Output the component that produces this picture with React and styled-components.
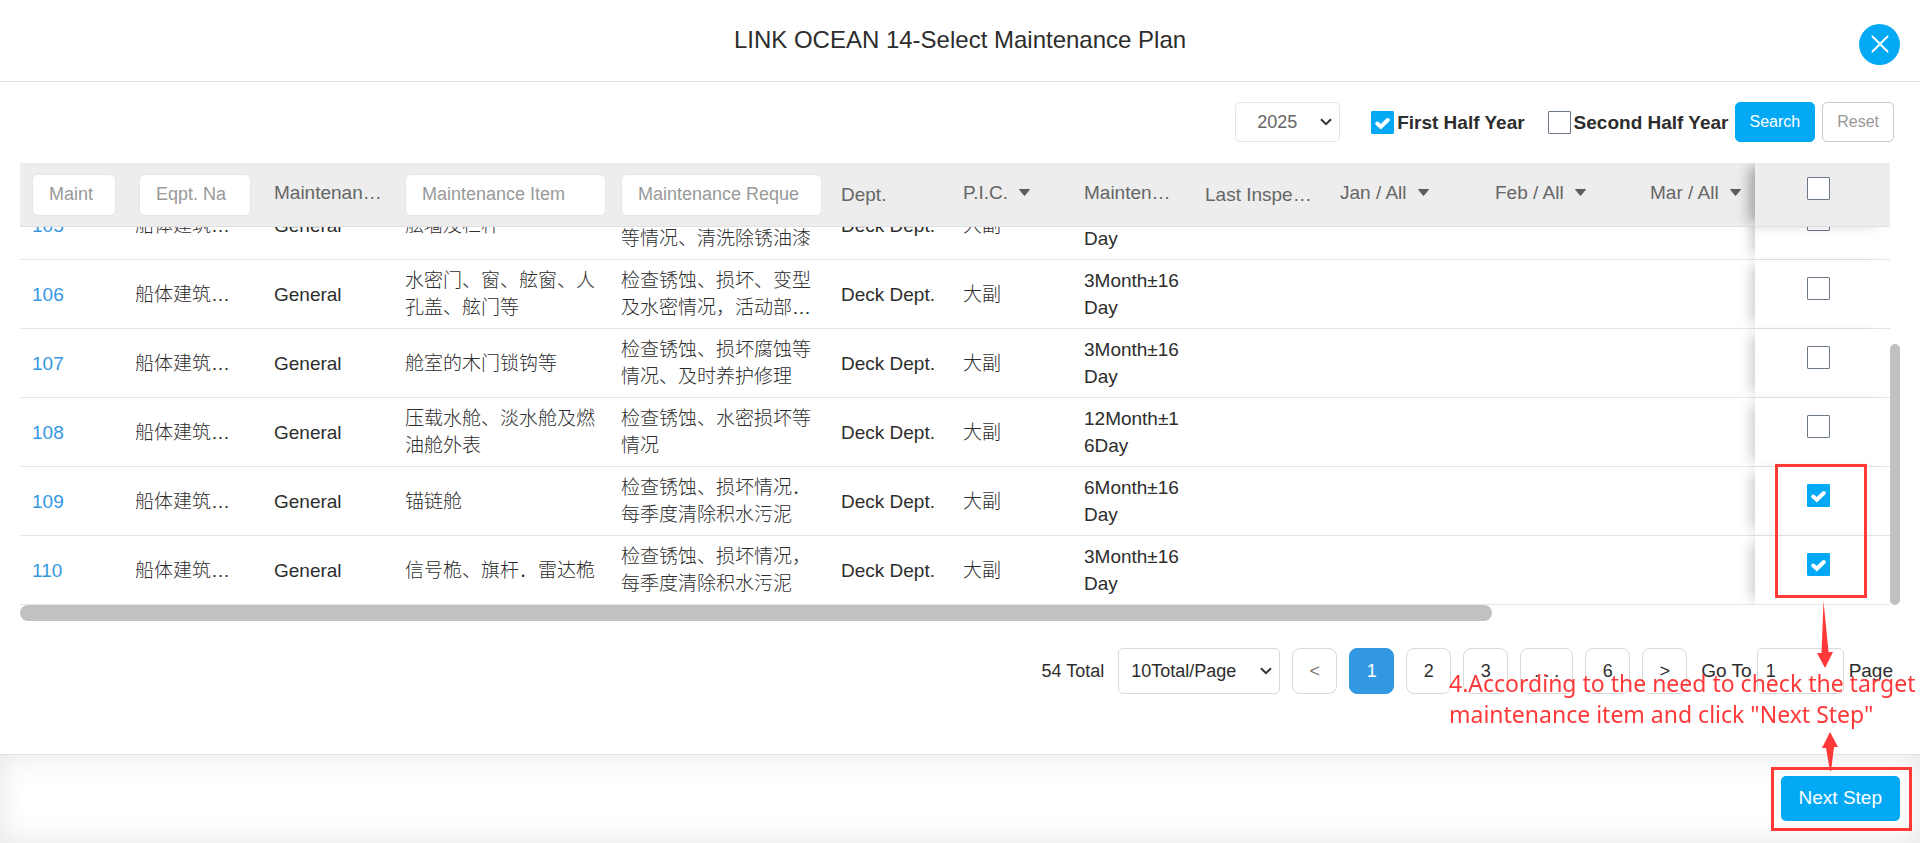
import React, { useLayoutEffect, useRef, useState } from 'react';
import styled, { createGlobalStyle } from 'styled-components';

const columns = [
  { key: 'no', width: 103, kind: 'input', label: 'Maint', trail: 7 },
  {
    key: 'equipment',
    width: 139,
    kind: 'input',
    label: 'Eqpt. Na',
    indent: 4,
    trail: 11,
  },
  { key: 'type', width: 131, kind: 'raised', label: 'Maintenan…' },
  {
    key: 'item',
    width: 216,
    kind: 'input',
    label: 'Maintenance Item',
    trail: 3,
  },
  {
    key: 'request',
    width: 220,
    kind: 'input',
    label: 'Maintenance Reque',
    trail: 7,
  },
  { key: 'dept', width: 122, kind: 'text', label: 'Dept.' },
  { key: 'pic', width: 121, kind: 'filter', label: 'P.I.C.' },
  { key: 'cycle', width: 121, kind: 'raised', label: 'Mainten…' },
  { key: 'last', width: 135, kind: 'text', label: 'Last Inspe…' },
  { key: 'jan', width: 155, kind: 'filter', label: 'Jan / All' },
  { key: 'feb', width: 155, kind: 'filter', label: 'Feb / All' },
  { key: 'mar', kind: 'filter', label: 'Mar / All' },
];

const shared = {
  equipment: '船体建筑…',
  type: 'General',
  dept: 'Deck Dept.',
  pic: '大副',
};

const plans = [
  {
    ...shared,
    no: '105',
    item: '舷墙及栏杆',
    request: '检查锈蚀、损坏、变形等情况、清洗除锈油漆',
    cycle: '3Month±16Day',
  },
  {
    ...shared,
    no: '106',
    item: '水密门、窗、舷窗、人孔盖、舷门等',
    request: '检查锈蚀、损坏、变型及水密情况，活动部…',
    cycle: '3Month±16Day',
  },
  {
    ...shared,
    no: '107',
    item: '舱室的木门锁钩等',
    request: '检查锈蚀、损坏腐蚀等情况、及时养护修理',
    cycle: '3Month±16Day',
  },
  {
    ...shared,
    no: '108',
    item: '压载水舱、淡水舱及燃油舱外表',
    request: '检查锈蚀、水密损坏等情况',
    cycle: '12Month±16Day',
  },
  {
    ...shared,
    no: '109',
    item: '锚链舱',
    request: '检查锈蚀、损坏情况．每季度清除积水污泥',
    cycle: '6Month±16Day',
  },
  {
    ...shared,
    no: '110',
    item: '信号桅、旗杆．雷达桅',
    request: '检查锈蚀、损坏情况，每季度清除积水污泥',
    cycle: '3Month±16Day',
  },
];

const CheckBox = ({ id, label, checked, onChange }) => (
  <BoxWrap>
    <input
      type="checkbox"
      id={id}
      aria-label={label}
      checked={checked}
      onChange={onChange}
    />
    {checked && (
      <svg viewBox="0 0 23 23" aria-hidden="true">
        <path d="M6.2 12.6 L9.8 15.8 L16.8 9" />
      </svg>
    )}
  </BoxWrap>
);

const Dropdown = ({ label, options, year }) => (
  <SelectWrap $year={year}>
    <select aria-label={label}>
      {options.map((option) => (
        <option key={option}>{option}</option>
      ))}
    </select>
    <svg viewBox="0 0 12 8" aria-hidden="true">
      <path d="M1 1.2 L6 6.2 L11 1.2" />
    </svg>
  </SelectWrap>
);

const HeadContent = ({ column }) => {
  if (column.kind === 'input') {
    return (
      <FilterInput
        type="text"
        aria-label={column.label}
        placeholder={column.label}
      />
    );
  }
  if (column.kind === 'filter') {
    return (
      <FilterButton type="button">
        {column.label}
        <svg viewBox="0 0 13 8" aria-hidden="true">
          <path d="M1.5 0.5 H11.5 L6.5 6.5 Z" />
        </svg>
      </FilterButton>
    );
  }
  return <HeadText $raised={column.kind === 'raised'}>{column.label}</HeadText>;
};

const PlanTable = () => {
  const viewport = useRef(null);
  const [selected, setSelected] = useState(['109', '110']);

  useLayoutEffect(() => {
    viewport.current.scrollTop = viewport.current.scrollHeight;
  }, []);

  const toggle = (no) =>
    setSelected((prev) =>
      prev.includes(no) ? prev.filter((n) => n !== no) : [...prev, no]
    );

  const allSelected = selected.length === plans.length;
  const toggleAll = () =>
    setSelected(allSelected ? [] : plans.map((plan) => plan.no));

  return (
    <TableArea>
      <Viewport ref={viewport}>
        <Table>
          <colgroup>
            {columns.map((column) => (
              <Col key={column.key} $width={column.width} />
            ))}
            <Col $width={135} />
          </colgroup>
          <thead>
            <tr>
              {columns.map((column) => (
                <Th
                  key={column.key}
                  $indent={column.indent}
                  $trail={column.trail}
                >
                  <HeadContent column={column} />
                </Th>
              ))}
              <PickTh>
                <CheckBox
                  label="Select all"
                  checked={allSelected}
                  onChange={toggleAll}
                />
              </PickTh>
            </tr>
          </thead>
          <tbody>
            {plans.map((plan) => (
              <tr key={plan.no}>
                {columns.map(({ key }) => (
                  <Td key={key}>
                    {key === 'no' ? <a href="#plan">{plan.no}</a> : plan[key]}
                  </Td>
                ))}
                <PickTd>
                  <CheckBox
                    label={`Select ${plan.no}`}
                    checked={selected.includes(plan.no)}
                    onChange={() => toggle(plan.no)}
                  />
                </PickTd>
              </tr>
            ))}
          </tbody>
        </Table>
      </Viewport>
      <VerticalBar />
      <HorizontalBar />
    </TableArea>
  );
};

const App = () => {
  const [first, setFirst] = useState(true);
  const [second, setSecond] = useState(false);

  return (
    <>
      <GlobalStyle />
      <Page>
        <Header>
          <h1>LINK OCEAN 14-Select Maintenance Plan</h1>
          <CloseButton type="button" aria-label="Close">
            <svg viewBox="0 0 18 18" aria-hidden="true">
              <path d="M1.5 1.5 L16.5 16.5 M16.5 1.5 L1.5 16.5" />
            </svg>
          </CloseButton>
        </Header>

        <Toolbar>
          <Dropdown label="Year" options={['2025']} year />
          <HalfYear>
            <CheckBox
              id="first-half"
              checked={first}
              onChange={() => setFirst(!first)}
            />
            <label htmlFor="first-half">First Half Year</label>
          </HalfYear>
          <HalfYear>
            <CheckBox
              id="second-half"
              checked={second}
              onChange={() => setSecond(!second)}
            />
            <label htmlFor="second-half">Second Half Year</label>
          </HalfYear>
          <Actions>
            <ToolButton type="button" $primary>
              Search
            </ToolButton>
            <ToolButton type="button">Reset</ToolButton>
          </Actions>
        </Toolbar>

        <PlanTable />

        <Pagination>
          <Total>54 Total</Total>
          <Dropdown label="Rows per page" options={['10Total/Page']} />
          <PageButton type="button" disabled>
            &lt;
          </PageButton>
          <PageButton type="button" $active>
            1
          </PageButton>
          <PageButton type="button">2</PageButton>
          <PageButton type="button">3</PageButton>
          <PageButton type="button">. . .</PageButton>
          <PageButton type="button">6</PageButton>
          <PageButton type="button">&gt;</PageButton>
          <GoTo>
            <label htmlFor="go-to">Go To</label>
            <input id="go-to" type="text" defaultValue="1" />
            <span>Page</span>
          </GoTo>
        </Pagination>

        <Footer>
          <NextButton type="button">Next Step</NextButton>
        </Footer>

        <RowsFrame />
        <NextFrame />
        <DownArrow viewBox="0 0 16 68" aria-hidden="true">
          <path d="M6.5 0 L11.5 51 L16 51 L8 67 L0 52 L4.5 52 Z" />
        </DownArrow>
        <UpArrow viewBox="0 0 16 39" aria-hidden="true">
          <path d="M8 0 L16 15 L12 15 L9 39 L8 39 L4 16 L0 16 Z" />
        </UpArrow>
        <Note>
          4.According to the need to check the target
          <br />
          maintenance item and click "Next Step"
        </Note>
      </Page>
    </>
  );
};

export default App;

const GlobalStyle = createGlobalStyle`
  :root {
    --blue-color: #03a9f4;
    --link-color: #3398e2;
    --red-color: #ff3838;
    --line-color: #e3e3e3;
  }

  * {
    box-sizing: border-box;
  }

  body {
    margin: 0;
    background: #fff;
    color: #2d2d2d;
  }

  body,
  button,
  input,
  select {
    font-family: 'Liberation Sans', 'Noto Sans CJK SC', sans-serif;
  }

  button {
    padding: 0;
    cursor: pointer;
  }
`;

const Page = styled.div`
  position: relative;
  display: flex;
  flex-direction: column;
  height: 100vh;
  overflow: hidden;
`;

const Header = styled.header`
  display: flex;
  align-items: center;
  flex-shrink: 0;
  height: 82px;
  padding: 0 20px 0 61px;
  border-bottom: 1px solid var(--line-color);

  h1 {
    flex: 1;
    margin: 0;
    padding-bottom: 2px;
    font-size: 24px;
    font-weight: 400;
    line-height: 32px;
    text-align: center;
  }
`;

const CloseButton = styled.button`
  display: flex;
  align-items: center;
  justify-content: center;
  width: 41px;
  height: 41px;
  margin-top: 8px;
  border: 0;
  border-radius: 50%;
  background: var(--blue-color);

  svg {
    width: 18px;
    margin-bottom: 2px;
    fill: none;
    stroke: #fff;
    stroke-width: 2;
    stroke-linecap: round;
  }
`;

const Toolbar = styled.div`
  display: flex;
  align-items: center;
  justify-content: flex-end;
  flex-shrink: 0;
  padding: 20px 26px 21px 20px;
`;

const SelectWrap = styled.div`
  display: grid;
  align-items: center;
  width: ${({ $year }) => ($year ? '105px' : '162px')};
  margin-right: ${({ $year }) => ($year ? '8px' : '0')};

  select,
  svg {
    grid-area: 1 / 1;
  }

  select {
    appearance: none;
    width: 100%;
    height: ${({ $year }) => ($year ? '40px' : '46px')};
    padding: ${({ $year }) => ($year ? '0 21px' : '0 12px')};
    border: 1px solid ${({ $year }) => ($year ? '#e3e6ea' : '#d9d9d9')};
    border-radius: 5px;
    background: #fff;
    color: ${({ $year }) => ($year ? '#666' : '#2d2d2d')};
    font-size: 18px;
  }

  svg {
    justify-self: end;
    width: 12px;
    margin-right: 8px;
    fill: none;
    stroke: #333;
    stroke-width: 2;
    pointer-events: none;
  }
`;

const BoxWrap = styled.span`
  display: inline-grid;
  vertical-align: top;

  input,
  svg {
    grid-area: 1 / 1;
    width: 23px;
    height: 23px;
  }

  input {
    appearance: none;
    margin: 0;
    border: 1px solid #6b7785;
    border-radius: 1px;
    background: #fff;
    cursor: pointer;
  }

  input:checked {
    border-color: var(--blue-color);
    background: var(--blue-color);
  }

  svg {
    fill: none;
    stroke: #fff;
    stroke-width: 4;
    stroke-linecap: round;
    pointer-events: none;
  }
`;

const HalfYear = styled.div`
  display: flex;
  align-items: center;
  gap: 3px;
  margin-left: 23px;
  font-size: 19px;
  font-weight: 700;

  label {
    padding-top: 2px;
  }
`;

const Actions = styled.div`
  display: flex;
  gap: 7px;
  margin-left: 6px;
`;

const ToolButton = styled.button`
  height: 40px;
  padding: 0 14px;
  border: 1px solid
    ${({ $primary }) => ($primary ? 'var(--blue-color)' : '#c8c8c8')};
  border-radius: 5px;
  background: ${({ $primary }) => ($primary ? 'var(--blue-color)' : '#fff')};
  color: ${({ $primary }) => ($primary ? '#fff' : '#999')};
  font-size: 16px;
`;

const TableArea = styled.div`
  display: grid;
  flex: 1;
  grid-template-columns: 1fr 10px;
  grid-template-rows: minmax(0, 1fr) 16px;
  min-height: 0;
  padding: 0 20px;
`;

const Viewport = styled.div`
  overflow: auto;
  scrollbar-width: none;
`;

const VerticalBar = styled.div`
  align-self: end;
  height: 59%;
  border-radius: 5px;
  background: #c1c1c1;
`;

const HorizontalBar = styled.div`
  width: 78.7%;
  border-radius: 8px;
  background: #c1c1c1;
`;

const Table = styled.table`
  width: 100%;
  table-layout: fixed;
  border-collapse: separate;
  border-spacing: 0;
  font-size: 19px;
  line-height: 27px;
`;

const Col = styled.col`
  width: ${({ $width }) => ($width ? `${$width}px` : 'auto')};
`;

const Th = styled.th`
  position: sticky;
  top: 0;
  z-index: 2;
  height: 64px;
  padding: 0 ${({ $trail = 10 }) => $trail}px 0
    ${({ $indent = 0 }) => 12 + $indent}px;
  border-bottom: 1px solid #e0e0e0;
  background: #ededed;
  color: #666;
  font-weight: 400;
  text-align: left;
  white-space: nowrap;
`;

const Td = styled.td`
  height: 69px;
  padding: 7px 10px 7px 12px;
  border-bottom: 1px solid #e3e5e8;
  font-weight: 300;
  word-break: break-all;

  a {
    color: var(--link-color);
    text-decoration: none;
  }
`;

const PickTh = styled(Th)`
  right: 0;
  z-index: 3;
  padding: 0 8px 9px 0;
  box-shadow: -10px 0 12px -4px rgba(0, 0, 0, 0.3);
  text-align: center;
`;

const PickTd = styled(Td)`
  position: sticky;
  right: 0;
  z-index: 1;
  padding: 0 8px 8px 0;
  background: #fff;
  box-shadow: -10px 0 12px -6px rgba(0, 0, 0, 0.2);
  text-align: center;
`;

const FilterInput = styled.input`
  display: block;
  width: 100%;
  height: 42px;
  padding: 0 20px 0 16px;
  border: 1px solid #e3e6ea;
  border-radius: 6px;
  background: #fff;
  font-size: 18px;

  &::placeholder {
    color: #999;
  }
`;

const HeadText = styled.span`
  display: block;
  padding-bottom: ${({ $raised }) => ($raised ? '4px' : '0')};
`;

const FilterButton = styled.button`
  display: flex;
  align-items: center;
  gap: 10px;
  padding-bottom: 4px;
  border: 0;
  background: none;
  color: #666;
  font-size: 19px;
  line-height: 27px;

  svg {
    width: 13px;
    fill: #5c5c5c;
    stroke: #5c5c5c;
    stroke-linejoin: round;
  }
`;

const Pagination = styled.nav`
  display: flex;
  align-items: center;
  justify-content: flex-end;
  flex-shrink: 0;
  gap: 12px;
  padding: 27px 27px 60px;
  font-size: 18px;
`;

const Total = styled.span`
  margin-right: 2px;
`;

const PageButton = styled.button`
  min-width: 45px;
  height: 46px;
  padding: 0 13px;
  border: 1px solid
    ${({ $active }) => ($active ? 'var(--link-color)' : '#d9d9d9')};
  border-radius: 8px;
  background: ${({ $active }) => ($active ? 'var(--link-color)' : '#fff')};
  color: ${({ $active }) => ($active ? '#fff' : '#2d2d2d')};
  font-size: 18px;

  &:disabled {
    color: #777;
  }
`;

const GoTo = styled.div`
  display: flex;
  align-items: center;
  gap: 5px;
  margin-left: 2px;
  font-size: 19px;

  input {
    width: 87px;
    height: 46px;
    padding: 0 8px;
    border: 1px solid #d9d9d9;
    border-radius: 5px;
    color: #2d2d2d;
    font-size: 18px;
  }
`;

const Footer = styled.footer`
  display: flex;
  align-items: center;
  justify-content: flex-end;
  flex-shrink: 0;
  height: 89px;
  padding: 0 20px 2px;
  border-top: 1px solid var(--line-color);
  box-shadow: inset 0 0 30px rgba(0, 0, 0, 0.1);
`;

const NextButton = styled.button`
  height: 45px;
  padding: 0 18px;
  border: 0;
  border-radius: 5px;
  background: var(--blue-color);
  color: #fff;
  font-size: 19px;
`;

/* Tutorial marks drawn over the dialog */
const Frame = styled.div`
  position: absolute;
  z-index: 4;
  border: 3px solid var(--red-color);
  pointer-events: none;
`;

const RowsFrame = styled(Frame)`
  right: 53px;
  bottom: 245px;
  width: 92px;
  height: 134px;
`;

const NextFrame = styled(Frame)`
  right: 8px;
  bottom: 12px;
  width: 141px;
  height: 64px;
`;

const Arrow = styled.svg`
  position: absolute;
  z-index: 4;
  width: 16px;
  fill: var(--red-color);
  pointer-events: none;
`;

const DownArrow = styled(Arrow)`
  right: 87px;
  bottom: 174px;
`;

const UpArrow = styled(Arrow)`
  right: 82px;
  bottom: 72px;
`;

const Note = styled.p`
  position: absolute;
  right: 11px;
  bottom: 113px;
  z-index: 4;
  width: 460px;
  margin: 0;
  color: var(--red-color);
  font-family: 'Noto Sans', sans-serif;
  font-size: 23px;
  line-height: 31px;
  white-space: nowrap;
  pointer-events: none;
`;
